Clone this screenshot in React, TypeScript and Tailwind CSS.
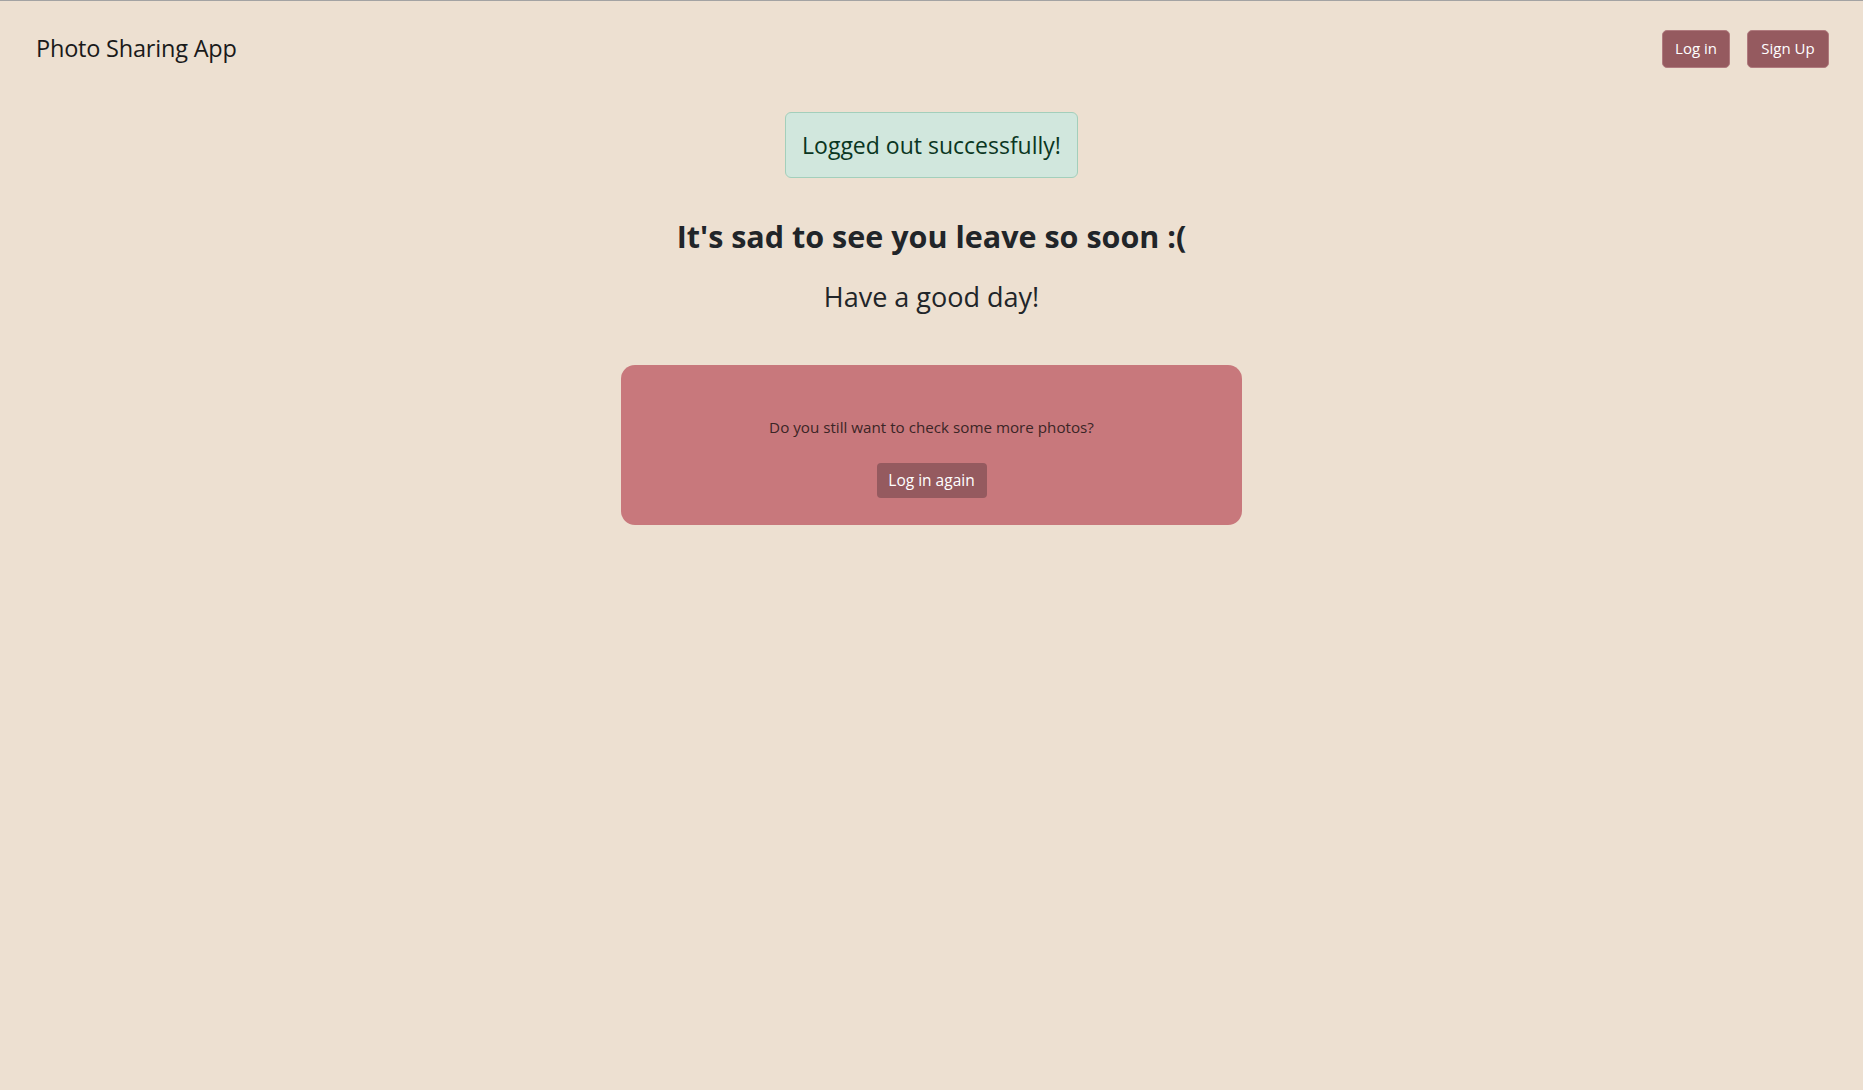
import React from 'react';

const FONT = { fontFamily: '"Open Sans", "Noto Sans", "Liberation Sans", sans-serif' };

const App: React.FC = () => {
  return (
    <div className="min-h-screen bg-[#ede0d1] border-t border-[#a3a3a3] text-[#212529]" style={FONT}>
      <header className="h-[95px] flex items-center justify-between pl-[36px] pr-[34px]">
        <div className="text-[23.5px] text-[#1a1a1a] tracking-[-0.2px]">Photo Sharing App</div>
        <div className="flex gap-[17px]">
          <button className="h-[38px] w-[68px] rounded-[5px] bg-[#955a5f] border border-[#b07a7e] text-white text-[15px]">Log in</button>
          <button className="h-[38px] w-[82px] rounded-[5px] bg-[#955a5f] border border-[#b07a7e] text-white text-[15px]">Sign Up</button>
        </div>
      </header>

      <main className="flex flex-col items-center">
        <div className="mt-[16px] h-[66px] w-[293px] flex items-center justify-center rounded-[6px] bg-[#d1e7dd] border border-[#a3cfbb] text-[#0a3622] text-[23px]">
          Logged out successfully!
        </div>

        <h3 className="mt-[38px] leading-[40px] text-[30.5px] font-bold text-[#212529]">It's sad to see you leave so soon :(</h3>
        <p className="mt-[23px] leading-[36px] text-[27px] text-[#212529]">Have a good day!</p>

        <div className="mt-[50px] w-[621px] h-[160px] rounded-[14px] bg-[#c8787c] flex flex-col items-center pt-[50px]">
          <p className="leading-[24px] text-[15.2px] text-[#3b2526]">Do you still want to check some more photos?</p>
          <button className="mt-[24px] h-[35px] w-[110px] rounded-[4px] bg-[#955a5f] text-white text-[15.5px]">Log in again</button>
        </div>
      </main>
    </div>
  );
};

export default App;
